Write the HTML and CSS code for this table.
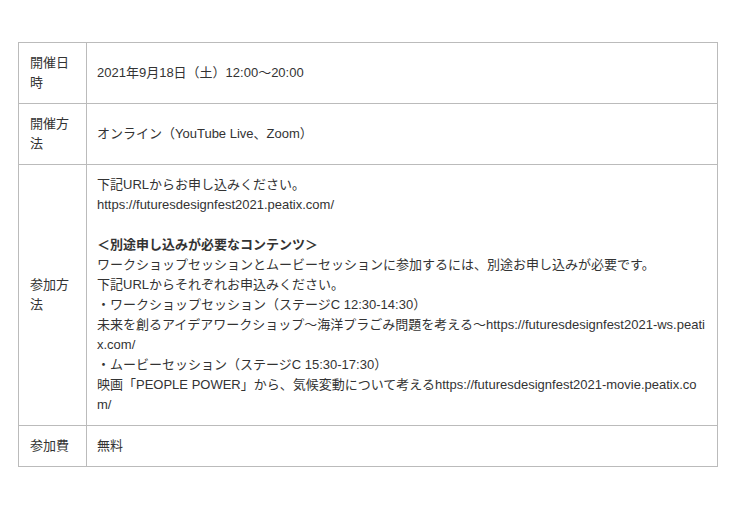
FILE: index.html
```html
<!DOCTYPE html>
<html lang="ja">
<head>
<meta charset="utf-8">
<link rel="stylesheet" href="styles.css">
</head>
<body>
<table class="info">
  <colgroup><col class="c-label"><col class="c-body"></colgroup>
  <tr>
    <td class="label">開催日時</td>
    <td class="body">2021年9月18日（土）12:00〜20:00</td>
  </tr>
  <tr>
    <td class="label">開催方法</td>
    <td class="body">オンライン（YouTube Live、Zoom）</td>
  </tr>
  <tr>
    <td class="label">参加方法</td>
    <td class="body">下記URLからお申し込みください。<br>https://futuresdesignfest2021.peatix.com/<br><br><b>＜別途申し込みが必要なコンテンツ＞</b><br>ワークショップセッションとムービーセッションに参加するには、別途お申し込みが必要です。<br>下記URLからそれぞれお申込みください。<br>・ワークショップセッション（ステージC 12:30-14:30）<br>未来を創るアイデアワークショップ〜海洋プラごみ問題を考える〜https://futuresdesignfest2021-ws.peatix.com/<br>・ムービーセッション（ステージC 15:30-17:30）<br>映画「PEOPLE POWER」から、気候変動について考えるhttps://futuresdesignfest2021-movie.peatix.com/</td>
  </tr>
  <tr>
    <td class="label">参加費</td>
    <td class="body">無料</td>
  </tr>
</table>
</body>
</html>
```
FILE: styles.css
```css
html, body {
  margin: 0;
  padding: 0;
  background: #fff;
}
body {
  padding: 42px 0 0 18px;
  font-family: "Liberation Sans", "Noto Sans CJK JP", sans-serif;
  font-size: 13px;
  line-height: 20px;
  color: #333;
}
.info {
  border-collapse: collapse;
  table-layout: fixed;
  width: 700px;
}
.c-label { width: 68px; }
.info td {
  border: 1px solid #bbb;
  padding: 10px 11px;
  vertical-align: middle;
  word-break: break-all;
}
.info .body {
  padding: 10px 10px;
}
.info b {
  font-weight: bold;
}
```
